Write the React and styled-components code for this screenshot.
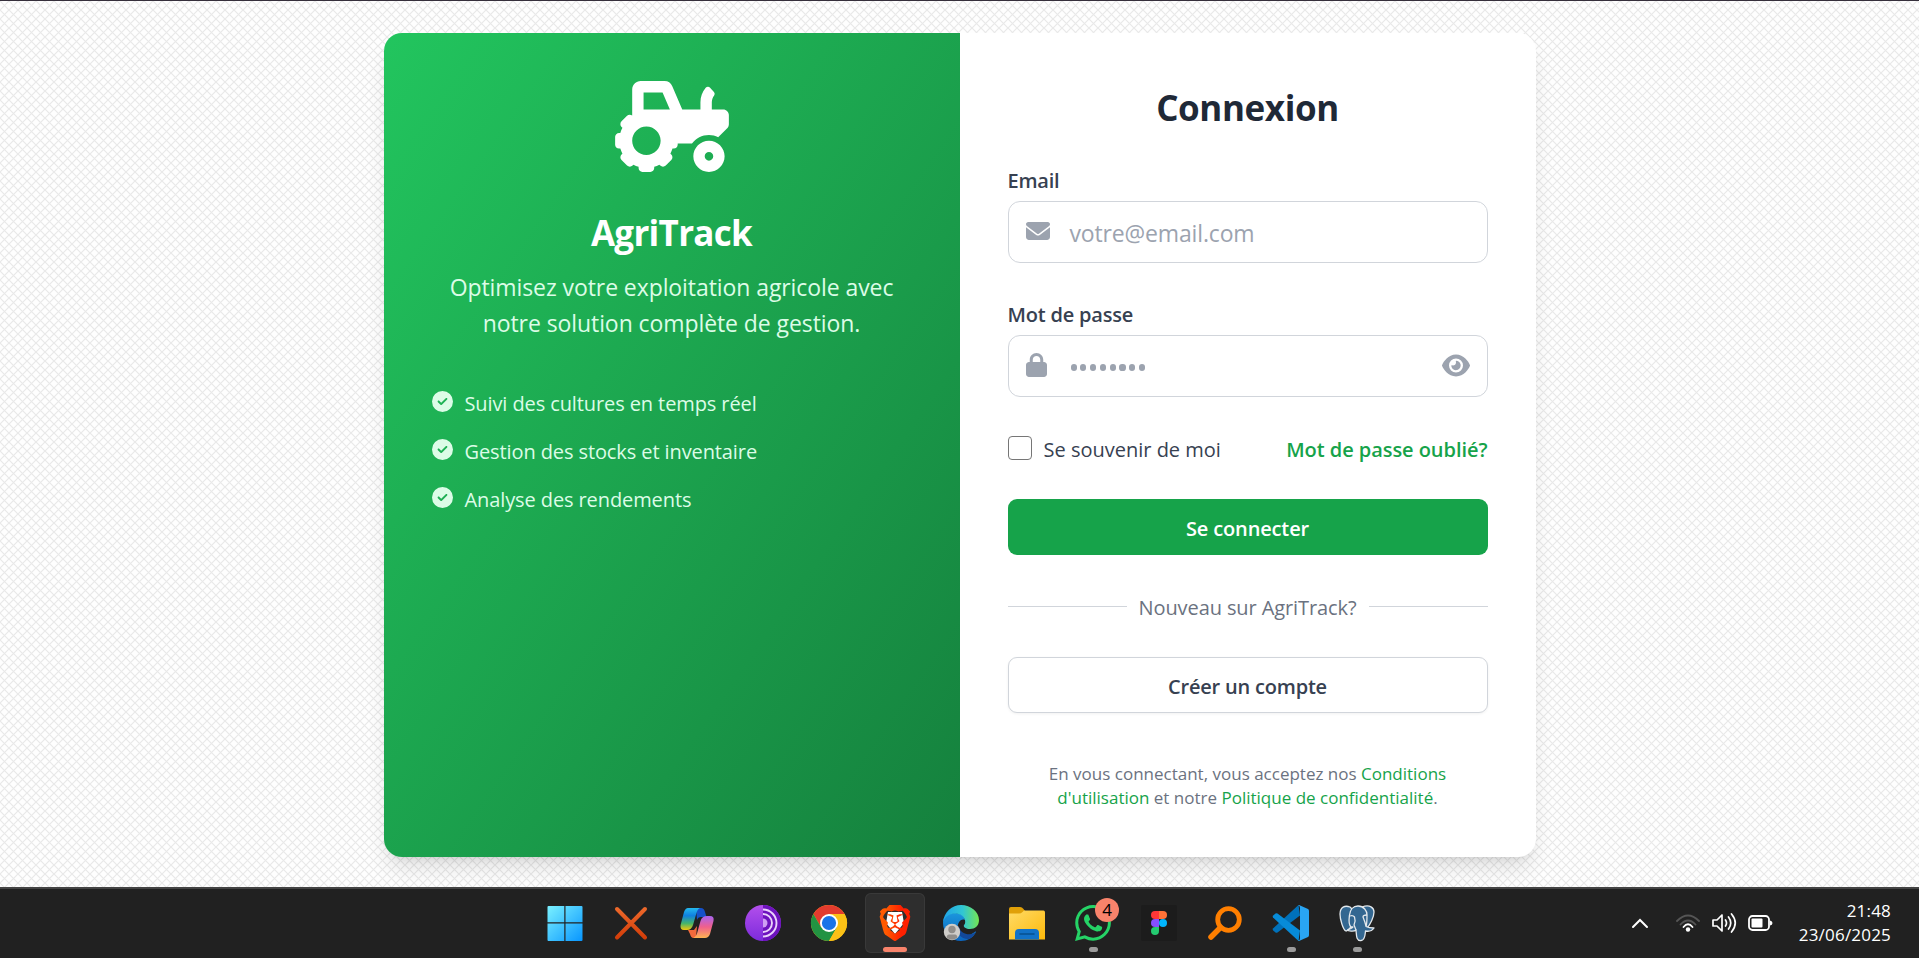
import React from 'react';
import styled, { createGlobalStyle, css } from 'styled-components';
import { FaTractor } from 'react-icons/fa';
import { FaEnvelope, FaLock, FaEye, FaCircleCheck } from 'react-icons/fa6';
import { SiBrave, SiWhatsapp } from 'react-icons/si';

const Global = createGlobalStyle`
  *, *::before, *::after { box-sizing: border-box; }
  body { margin: 0; font-family: 'Segoe UI', 'Open Sans', 'Noto Sans', sans-serif; overflow: hidden; }
  h1, h2, p, ul { margin: 0; padding: 0; }
`;

const Screen = styled.div`
  height: 958px;
  display: flex;
  flex-direction: column;
  border-top: 1px solid #36303c;
  background-color: #fefefe;
  background-image: url("data:image/svg+xml,%3Csvg xmlns='http://www.w3.org/2000/svg' width='9' height='9'%3E%3Cpath d='M-1 -1L10 10M10 -1L-1 10' stroke='%23e9e9e9' stroke-width='1.2'/%3E%3C/svg%3E");
`;
const Main = styled.main`
  flex: 1;
  display: flex;
  justify-content: center;
  padding-top: 32px;
  overflow: hidden;
`;
const Card = styled.section`
  width: 1152px;
  height: 824px;
  display: flex;
  border-radius: 18px;
  background: #fff;
  overflow: hidden;
  box-shadow: 0 15px 22px -4px rgba(0,0,0,.11), 0 6px 9px -6px rgba(0,0,0,.12);
`;
const Hero = styled.div`
  width: 576px;
  padding: 48px;
  display: flex;
  flex-direction: column;
  align-items: center;
  background: linear-gradient(to bottom right, #22c55e, #15803d);
  color: #dcfce7;
`;
const TractorBox = styled.div`
  height: 90px;
  display: flex;
  svg { width: 114px; height: 91px; color: #fff; }
`;
const Text = styled.span`
  white-space: nowrap;
  font-size: ${p => p.$s}px;
  line-height: ${p => p.$lh}px;
  letter-spacing: ${p => p.$ls || 0}px;
  font-weight: ${p => p.$w || 400};
  color: ${p => p.$c || 'inherit'};
  padding-top: ${p => p.$pt || 0}px;
`;
const Title = styled(Text)`margin-top: 38px;`;
const Tagline = styled.p`
  margin-top: 12px;
  display: flex;
  flex-direction: column;
  align-items: center;
`;
const Features = styled.ul`
  align-self: stretch;
  list-style: none;
  margin-top: 47px;
  display: flex;
  flex-direction: column;
  gap: 18px;
`;
const Feature = styled.li`
  height: 30px;
  display: flex;
  gap: 12px;
  svg { width: 21px; height: 21px; margin-top: 3px; }
`;
const Form = styled.form`
  width: 576px;
  padding: 48px;
  display: flex;
  flex-direction: column;
`;
const Heading = styled(Text)`align-self: center; height: 54px;`;
const Field = styled.label`
  display: flex;
  flex-direction: column;
  margin-top: ${p => p.$mt}px;
`;
const InputBox = styled.div`
  margin-top: 5px;
  height: 62px;
  border: 1px solid #d1d5db;
  border-radius: 12px;
  display: flex;
  align-items: center;
  padding: 0 17px;
  color: #9ca3af;
`;
const IconSlot = styled.span`
  width: 44px;
  display: flex;
  svg { width: ${p => p.$w}px; height: 24px; margin-top: -2px; }
`;
const EyeSlot = styled.span`
  margin-left: auto;
  display: flex;
  svg { width: 28px; height: 25px; margin-top: -1px; }
`;
const Dots = styled.span`
  display: flex;
  gap: 3.6px;
  margin: 3px 0 0 1px;
  i { width: 6.2px; height: 6.2px; border-radius: 50%; background: #9ca3af; }
`;
const Options = styled.div`
  margin-top: 36px;
  height: 32px;
  display: flex;
  align-items: center;
`;
const Check = styled.span`
  width: 24px;
  height: 24px;
  border: 1.5px solid #767676;
  border-radius: 4px;
  margin: -2px 12px 0 0;
`;
const Spacer = styled.span`flex: 1;`;
const Button = styled.button`
  height: 56px;
  flex: none;
  padding: 3px 0 0;
  border-radius: 9px;
  font-family: inherit;
  ${p => p.$outline ? css`
    border: 1px solid #d1d5db; background: #fff; color: #374151; box-shadow: 0 1px 3px rgba(0,0,0,.06); margin-top: 36px;
  ` : css`
    border: 0; background: #16a34a; color: #fff; margin-top: 34px;
  `}
`;
const Divider = styled.div`
  margin-top: 36px;
  height: 30px;
  display: flex;
  justify-content: space-between;
  align-items: center;
  &::before, &::after { content: ''; width: 119px; height: 1px; background: #d1d5db; }
`;
const Legal = styled.p`
  margin-top: 49px;
  display: flex;
  flex-direction: column;
  align-items: center;
  color: #6b7280;
  b { font-weight: 400; color: #16a34a; }
`;

const Taskbar = styled.footer`
  height: 71px;
  flex: none;
  display: grid;
  grid-template-columns: 1fr auto 1fr;
  border-top: 2px solid #444;
  background: #212121;
`;
const Apps = styled.div`
  grid-column: 2;
  display: flex;
  gap: 6px;
  padding-top: 4px;
  margin-left: 3px;
`;
const AppTile = styled.div`
  width: 60px;
  height: 60px;
  border-radius: 6px;
  display: flex;
  flex-direction: column;
  align-items: center;
  padding-top: 12px;
  position: relative;
  ${p => p.$active && css`background: #2e2e2e; box-shadow: inset 0 0 0 1px #393939;`}
  > svg { width: 36px; height: 36px; flex: none; overflow: visible; }
`;
const Mark = styled.i`
  margin-top: 6px;
  height: 5px;
  border-radius: 3px;
  width: ${p => p.$active ? 24 : 9}px;
  background: ${p => p.$active ? '#f8836b' : '#9b9b9b'};
`;
const Badge = styled.span`
  position: absolute;
  left: 32px;
  top: 5px;
  width: 24px;
  height: 24px;
  border-radius: 50%;
  background: #f8836b;
  color: #000;
  font-size: 17px;
  line-height: 24px;
  text-align: center;
`;
const Tray = styled.div`
  display: flex;
  justify-content: flex-end;
  align-items: center;
  padding: 0 28px 2px 0;
  color: #fff;
  > svg { flex: none; }
`;
const Clock = styled.div`
  width: 94px;
  margin-left: 24px;
  display: flex;
  flex-direction: column;
  align-items: flex-end;
`;

const Windows = () => (
  <svg viewBox="0 0 36 36"><defs><linearGradient id="win" x1="0" y1="0" x2="36" y2="36" gradientUnits="userSpaceOnUse"><stop stopColor="#7df3ff" /><stop offset="1" stopColor="#0795ff" /></linearGradient></defs>
    <path fill="url(#win)" d="M1.500 1H17.300V17.300H.500V2Q.500 1 1.500 1ZM18.500 1H34.500Q35.500 1 35.500 2V17.300H18.500ZM.500 18.500H17.300V36H1.500Q.500 36 .500 35ZM18.500 18.500H35.500V35Q35.500 36 34.500 36H18.500Z" /></svg>
);
const Cross = () => (
  <svg viewBox="0 0 36 36"><defs><linearGradient id="crs" x1="0" y1="2" x2="0" y2="34" gradientUnits="userSpaceOnUse"><stop stopColor="#ee6a2c" /><stop offset="1" stopColor="#d23c08" /></linearGradient></defs>
    <path d="M4 4L32 32.500M32 4L4 32.500" stroke="url(#crs)" strokeWidth="4" strokeLinecap="round" /></svg>
);
const Copilot = () => (
  <svg viewBox="0 0 36 36"><defs>
    <linearGradient id="cp1" x1="0" y1="0" x2="0" y2="1"><stop stopColor="#24b9ee" /><stop offset=".35" stopColor="#0f7fe0" /><stop offset=".7" stopColor="#45b56a" /><stop offset="1" stopColor="#f2c70c" /></linearGradient>
    <linearGradient id="cp2" x1="0" y1="0" x2="0" y2="1"><stop stopColor="#a864f0" /><stop offset=".5" stopColor="#f0608c" /><stop offset="1" stopColor="#ffb452" /></linearGradient></defs>
    <path fill="#1551c8" d="M17 3H22Q25 3 26 7L27.500 12H22Q19 12 18 15Z" />
    <path fill="#f36a3c" d="M9 25H15L18 21L17 33H14.500Q12 33 11 29Z" />
    <path fill="url(#cp1)" d="M9 3H21Q18.500 4 17.500 8L14 20Q12.500 25 8 25H5Q.800 25 1.600 20L5 7Q6.500 3 9 3Z" />
    <path fill="url(#cp2)" d="M28 11H31Q35.500 11 34.500 16L31 29Q29.500 33 26 33H14.500Q17 32 18 28.500L21.500 16Q23 11 28 11Z" /></svg>
);
const Tor = () => (
  <svg viewBox="0 0 36 36"><defs><linearGradient id="tor" x1="0" y1="0" x2="0" y2="1"><stop stopColor="#b34fec" /><stop offset="1" stopColor="#7d2bdc" /></linearGradient></defs>
    <circle cx="18" cy="18" r="18" fill="url(#tor)" /><path d="M18 0A18 18 0 0 1 18 36Z" fill="#6d12bd" />
    <path d="M18 4.500A13.500 13.500 0 0 1 18 31.500M18 9A9 9 0 0 1 18 27" fill="none" stroke="#ead2fb" strokeWidth="1.900" /><path d="M18 13.500A4.500 4.500 0 0 1 18 22.500Z" fill="#cf9ff3" /></svg>
);
const Chrome = () => (
  <svg viewBox="0 0 36 36"><circle cx="18" cy="18" r="18" fill="#fbc116" />
    <path fill="#e33b2e" d="M18 9H33.600A18 18 0 0 0 2.400 9L10.200 22.500Z" />
    <path fill="#229342" d="M2.400 9A18 18 0 0 0 18 36L25.800 22.500L10.200 22.500Z" />
    <path fill="#fbc116" d="M18 36L25.800 22.500L26 9H33.600A18 18 0 0 1 18 36Z" />
    <circle cx="18" cy="18" r="9" fill="#fff" /><circle cx="18" cy="18" r="7.100" fill="#1a73e8" /></svg>
);
const Brave = () => (
  <svg viewBox="0 0 36 36"><defs><linearGradient id="brv"><stop offset=".2" stopColor="#ff5a00" /><stop offset=".7" stopColor="#ff2000" /></linearGradient></defs>
    <path d="M11 7H25L27 18L18 29L9 18Z" fill="#fff" />
    <SiBrave size={36} style={{ fill: 'url(#brv)' }} /></svg>
);
const Edge = () => (
  <svg viewBox="0 0 36 36"><defs>
    <linearGradient id="ed1"><stop stopColor="#1fa3e8" /><stop offset=".55" stopColor="#31c6d3" /><stop offset="1" stopColor="#74e552" /></linearGradient>
    <linearGradient id="ed2" x1="0" y1="0" x2="0" y2="1"><stop stopColor="#1b96dd" /><stop offset="1" stopColor="#0b64bd" /></linearGradient></defs>
    <path fill="url(#ed2)" d="M0 18C0 11 6 8 12 8C19 8 22 12 22 15C18 13 14 18 15 23C16 28 21 31 26 30C30 29 33 25 33 27C30 33 24 36 18 36C8 36 0 28 0 18Z" />
    <path fill="#12489a" d="M13 20C12 29 20 35 26 34C29 33 32 29 33 27C28 31 18 30 16 22Z" />
    <path fill="url(#ed1)" d="M0 17C1 7 9 0 18 0C28 0 36 7 36 15C36 21 32 24 27 24C23 24 20 22 21 20C22 19 22.500 18 22 15C21 11 17 8.500 12 8.500C6 8.500 2 12 0 17Z" />
    <circle cx="9" cy="27" r="8.200" fill="#cfcdca" /><circle cx="9" cy="24.500" r="3.700" fill="#918e8b" /><path d="M3.500 32.500Q4 29.500 6 29.500H12Q14 29.500 14.500 32.500Q9 37 3.500 32.500Z" fill="#918e8b" /></svg>
);
const Folder = () => (
  <svg viewBox="0 0 36 36"><defs><linearGradient id="fld" x1="0" y1="0" x2="1" y2="1"><stop stopColor="#ffdb66" /><stop offset="1" stopColor="#fdb90b" /></linearGradient></defs>
    <path fill="#e0a008" d="M0 4Q0 2 2 2H11Q13 2 14.500 4L16 6V12H0Z" /><path fill="url(#fld)" d="M0 8.500H10Q12 8.500 13.500 7L15 5.500H34.500Q36 5.500 36 7.500V34.500H0Z" />
    <path fill="#1272c8" d="M6 34.500V28Q6 24 10 24H26Q30 24 30 28V34.500Z" /><path d="M11 29H25" stroke="#07508f" strokeWidth="1.600" strokeLinecap="round" /></svg>
);
const Figma = () => (
  <svg viewBox="0 0 36 36"><rect width="36" height="36" rx="2" fill="#1c1c1c" />
    <path fill="#ff3737" d="M18 6H14A4 4 0 0 0 14 14H18Z" /><path fill="#ff7237" d="M18 6H22A4 4 0 0 1 22 14H18Z" />
    <path fill="#874fff" d="M18 14H14A4 4 0 0 0 14 22H18Z" /><circle cx="22" cy="18" r="4" fill="#00b6ff" /><path fill="#24cb71" d="M18 22H14A4 4 0 1 0 18 26Z" /></svg>
);
const Search = () => (
  <svg viewBox="0 0 36 36" fill="none" stroke="#ff7f00" strokeLinecap="round"><circle cx="21.500" cy="14.500" r="10.800" strokeWidth="4.800" /><path d="M13.500 22.500L4 32" strokeWidth="5.500" /></svg>
);
const Code = () => (
  <svg viewBox="0 0 36 36"><path fill="#0071ba" d="M25.500 0L0 23.500Q-.800 24.500 .200 25.500L2.500 27.500Q3.500 28 4.500 27.500L27 10.500Z" />
    <path fill="#078bd8" d="M25.500 36L0 12.500Q-.800 11.500 .200 10.500L2.500 8.500Q3.500 8 4.500 8.500L27 25.500Z" />
    <path fill="#29a5f4" d="M26 36Q24.500 36 25 35.500Q27 36 27 33V3Q27 0 25 .500Q25 0 26 0L35 4Q36 4.500 36 6V30Q36 31.500 35 32Z" /></svg>
);
const Postgres = () => (
  <svg viewBox="0 0 36 36" fill="#336791" stroke="#e3e8ec" strokeWidth="1.300" strokeLinejoin="round">
    <path d="M11 2C6 0 1 2 1 9C1 14 4 25 7 26C9 26 12 22 12 21L15 6Z" />
    <path d="M23 2C31 -1 35 3 35 7C35 12 31 20 28 23L23 20Z" />
    <path d="M12 22C9 19 10 14 10.500 10C11 5 14 1 19 1C25 1 28 6 28 10C28 15 28 19 27 21.500C30 23 33 23 35 23C33 26 29 26.500 26.500 26C26 29 26.500 35 22 35.500C17 36 17.500 30 17 25C15 27 9 26 8.500 25C9 24 13 24 14 22Z" />
    <path d="M11 11Q14 10 15.500 12Q17 16 15 20L17 25M28 10Q24 10 24 12Q26 17 27 21" fill="none" /></svg>
);
const WhatsApp = () => <SiWhatsapp size={36} color="#25d366" />;

const apps = [
  { I: Windows }, { I: Cross }, { I: Copilot }, { I: Tor }, { I: Chrome }, { I: Brave, active: true },
  { I: Edge }, { I: Folder }, { I: WhatsApp, open: true, badge: 4 }, { I: Figma }, { I: Search },
  { I: Code, open: true }, { I: Postgres, open: true },
];
const features = ['Suivi des cultures en temps réel', 'Gestion des stocks et inventaire', 'Analyse des rendements'];

export default function App() {
  return (
    <Screen>
      <Global />
      <Main>
        <Card>
          <Hero>
            <TractorBox><FaTractor /></TractorBox>
            <Title as="h1" $s={35} $lh={48} $w={700} $c="#fff" $ls={-0.7}>AgriTrack</Title>
            <Tagline>
              <Text $s={23} $lh={36} $ls={-0.08}>Optimisez votre exploitation agricole avec</Text>
              <Text $s={23} $lh={36} $ls={-0.08}>notre solution complète de gestion.</Text>
            </Tagline>
            <Features>
              {features.map(t => <Feature key={t}><FaCircleCheck /><Text $s={20} $lh={30} $ls={-0.1} $pt={1}>{t}</Text></Feature>)}
            </Features>
          </Hero>
          <Form>
            <Heading as="h2" $s={35} $lh={54} $w={700} $c="#1f2937" $ls={-0.4}>Connexion</Heading>
            <Field $mt={31}>
              <Text $s={20} $lh={30} $w={600} $c="#374151" $ls={-0.2}>Email</Text>
              <InputBox><IconSlot $w={24}><FaEnvelope /></IconSlot><Text $s={23} $lh={36} $ls={-0.15} $pt={1}>votre@email.com</Text></InputBox>
            </Field>
            <Field $mt={37}>
              <Text $s={20} $lh={30} $w={600} $c="#374151" $ls={-0.2}>Mot de passe</Text>
              <InputBox><IconSlot $w={21}><FaLock /></IconSlot><Dots>{[...Array(8)].map((_, i) => <i key={i} />)}</Dots><EyeSlot><FaEye /></EyeSlot></InputBox>
            </Field>
            <Options>
              <Check /><Text $s={20} $lh={30} $c="#374151" $pt={2}>Se souvenir de moi</Text><Spacer />
              <Text $s={20} $lh={30} $w={600} $c="#16a34a" $ls={-0.05} $pt={2}>Mot de passe oublié?</Text>
            </Options>
            <Button type="button"><Text $s={20} $lh={30} $w={600} $ls={-0.15}>Se connecter</Text></Button>
            <Divider><Text $s={20} $lh={30} $c="#6b7280" $ls={-0.1} $pt={4}>Nouveau sur AgriTrack?</Text></Divider>
            <Button type="button" $outline><Text $s={20} $lh={30} $w={600} $ls={-0.2}>Créer un compte</Text></Button>
            <Legal>
              <Text $s={17} $lh={24}>En vous connectant, vous acceptez nos <b>Conditions</b></Text>
              <Text $s={17} $lh={24}><b>d'utilisation</b> et notre <b>Politique de confidentialité</b>.</Text>
            </Legal>
          </Form>
        </Card>
      </Main>
      <Taskbar>
        <Apps>
          {apps.map(({ I, active, open, badge }, i) => (
            <AppTile key={i} $active={active}><I />{(active || open) && <Mark $active={active} />}{badge && <Badge>{badge}</Badge>}</AppTile>
          ))}
        </Apps>
        <Tray>
          <svg width="18" height="12" viewBox="0 0 18 12" fill="none" stroke="#fff" strokeWidth="2" strokeLinecap="round"><path d="M2 10L9 3L16 10" /></svg>
          <svg width="26" height="20" viewBox="0 0 26 20" fill="none" strokeWidth="1.800" strokeLinecap="round" style={{ marginLeft: 26 }}><path d="M2 8Q13 -3 24 8M5.500 11.500Q13 3.500 20.500 11.500" stroke="#555" /><path d="M8.500 14Q13 8.500 17.500 14" stroke="#fff" /><circle cx="13" cy="16.500" r="2.200" fill="#fff" /></svg>
          <svg width="26" height="22" viewBox="0 0 26 22" fill="none" stroke="#fff" strokeWidth="1.700" strokeLinecap="round" strokeLinejoin="round" style={{ marginLeft: 10 }}><path d="M2 8H6L11 3V19L6 14H2ZM14.500 8Q16.500 11 14.500 14M17.500 5Q22 11 17.500 17M20.500 2Q28 11 20.500 20" /></svg>
          <svg width="26" height="18" viewBox="0 0 26 18" fill="none" style={{ marginLeft: 10 }}><rect x="2" y="2" width="20" height="14" rx="3.500" stroke="#fff" strokeWidth="1.800" /><rect x="4.500" y="4.500" width="11" height="9" rx="1" fill="#fff" /><path d="M23 6.500Q25.500 7 25.500 9T23 11.500Z" fill="#fff" /></svg>
          <Clock><Text $s={17} $lh={24} $ls={0.2}>21:48</Text><Text $s={17} $lh={24} $ls={0.2}>23/06/2025</Text></Clock>
        </Tray>
      </Taskbar>
    </Screen>
  );
}
